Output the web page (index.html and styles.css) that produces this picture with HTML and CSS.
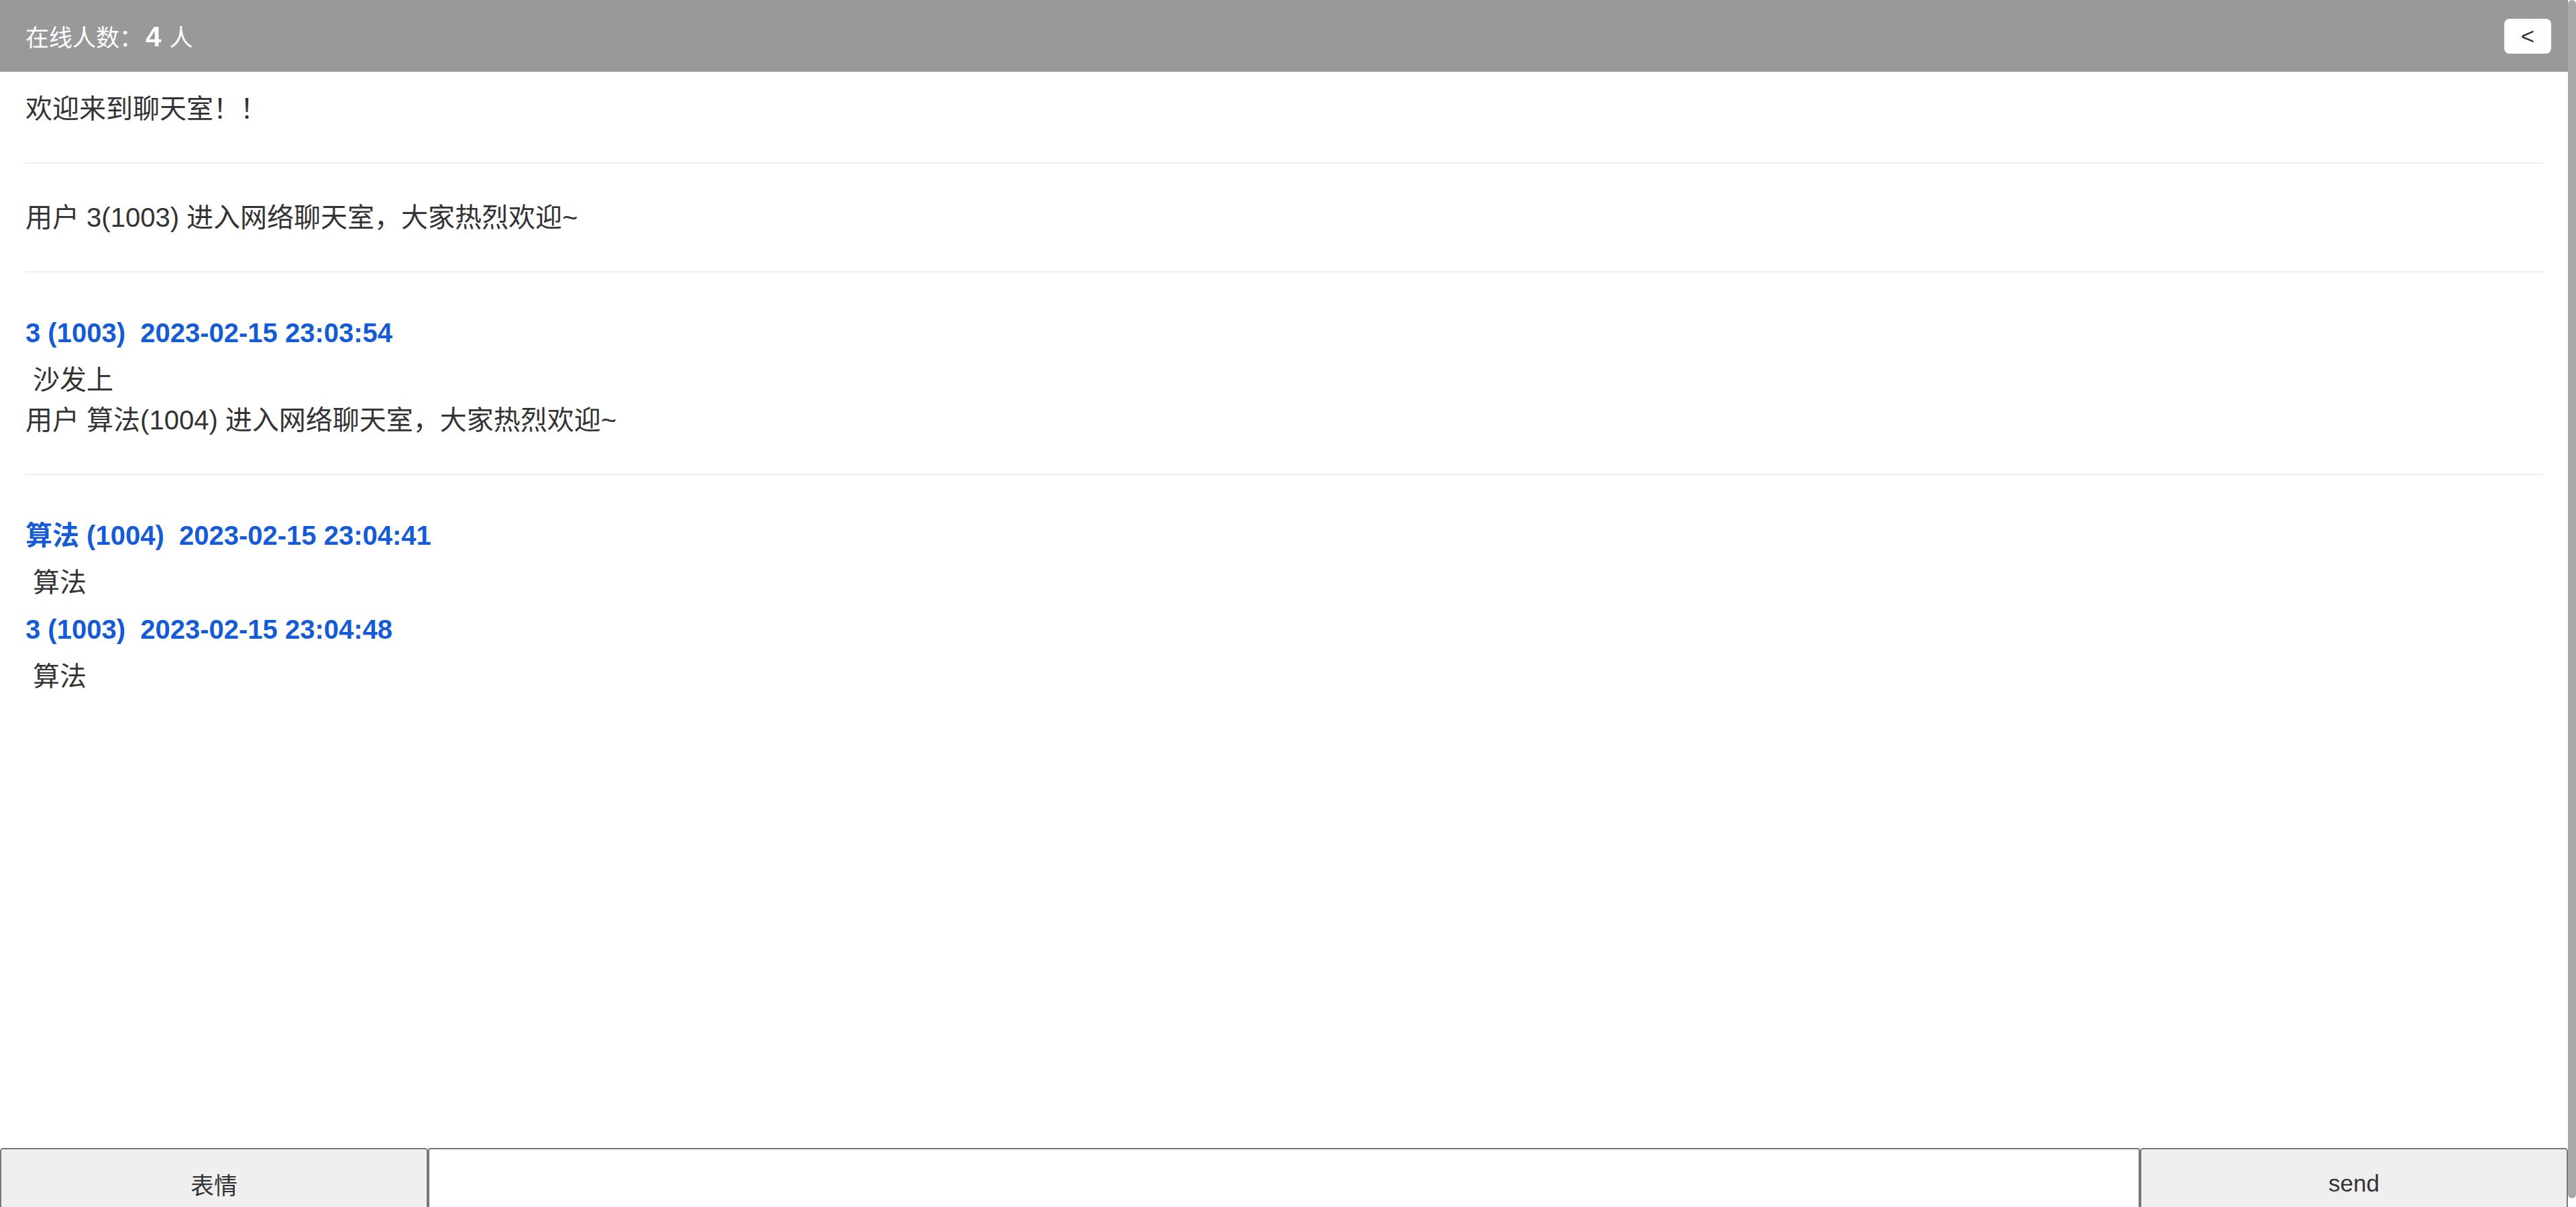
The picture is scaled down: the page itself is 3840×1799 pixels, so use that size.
FILE: index.html
```html
<!DOCTYPE html>
<html lang="zh-CN">
<head>
  <meta charset="UTF-8">
  <title>网络聊天室</title>
  <link rel="stylesheet" href="styles.css">
</head>
<body>

  <div class="top-bar">
    <div class="online">在线人数：<b class="online-count">4</b>人</div>
    <button class="back-btn">&lt;</button>
  </div>

  <div class="chat-list">
    <div class="msg first">
      <div class="sys">欢迎来到聊天室！！</div>
    </div>
    <div class="msg">
      <div class="sys">用户 3(1003) 进入网络聊天室，大家热烈欢迎~</div>
    </div>
    <div class="msg">
      <div class="meta">3 (1003)&nbsp; 2023-02-15 23:03:54</div>
      <div class="text">&nbsp;沙发上</div>
      <div class="sys">用户 算法(1004) 进入网络聊天室，大家热烈欢迎~</div>
    </div>
    <div class="msg last">
      <div class="meta">算法 (1004)&nbsp; 2023-02-15 23:04:41</div>
      <div class="text">&nbsp;算法</div>
      <div class="meta">3 (1003)&nbsp; 2023-02-15 23:04:48</div>
      <div class="text">&nbsp;算法</div>
    </div>
  </div>

  <div class="send-bar">
    <button class="bar-btn">表情</button>
    <input type="text" class="msg-input">
    <button class="bar-btn">send</button>
  </div>

  <div class="scroll-thumb"></div>

</body>
</html>
```

FILE: styles.css
```css
* {
  margin: 0;
  padding: 0;
  box-sizing: border-box;
}
body {
  font-family: "Liberation Sans", "Noto Sans CJK SC", sans-serif;
  color: #333;
  background: #fff;
  margin-right: 12px;
}
.scroll-thumb {
  position: fixed;
  top: 0;
  right: 0;
  width: 12px;
  height: 1786px;
  background: #a8a8a8;
  border-radius: 6px;
}
.top-bar {
  height: 107px;
  background: #999;
  color: #fff;
  display: flex;
  align-items: center;
  justify-content: space-between;
  padding: 0 25px 0 38px;
}
.online {
  font-size: 35px;
}
.online-count {
  font-size: 42px;
  margin: 0 12px 0 4px;
}
.back-btn {
  width: 70px;
  height: 52px;
  background: #fff;
  color: #333;
  border: none;
  border-radius: 8px;
  font-family: inherit;
  font-size: 35px;
  cursor: pointer;
}
.chat-list {
  height: 1604px;
  padding: 0 37px 0 38px;
  overflow: hidden;
}
.msg {
  padding: 56px 0;
  border-bottom: 2px solid #eee;
}
.msg.first {
  padding-top: 31px;
}
.msg.last {
  border-bottom: none;
}
.sys {
  font-size: 40px;
  line-height: 48px;
}
.meta {
  font-size: 40px;
  font-weight: bold;
  color: #155bd5;
  line-height: 68px;
}
.text {
  font-size: 40px;
  line-height: 72px;
}
.send-bar {
  height: 106px;
  display: flex;
}
.bar-btn {
  width: calc(100% / 6);
  height: 100%;
  background: #efefef;
  color: #333;
  border: 2px solid #767676;
  border-radius: 5px;
  font-family: inherit;
  font-size: 35px;
  cursor: pointer;
}
.msg-input {
  flex: 1;
  height: 100%;
  border: 2px solid #767676;
  border-radius: 3px;
  font-size: 35px;
  padding: 0 10px;
}
```
